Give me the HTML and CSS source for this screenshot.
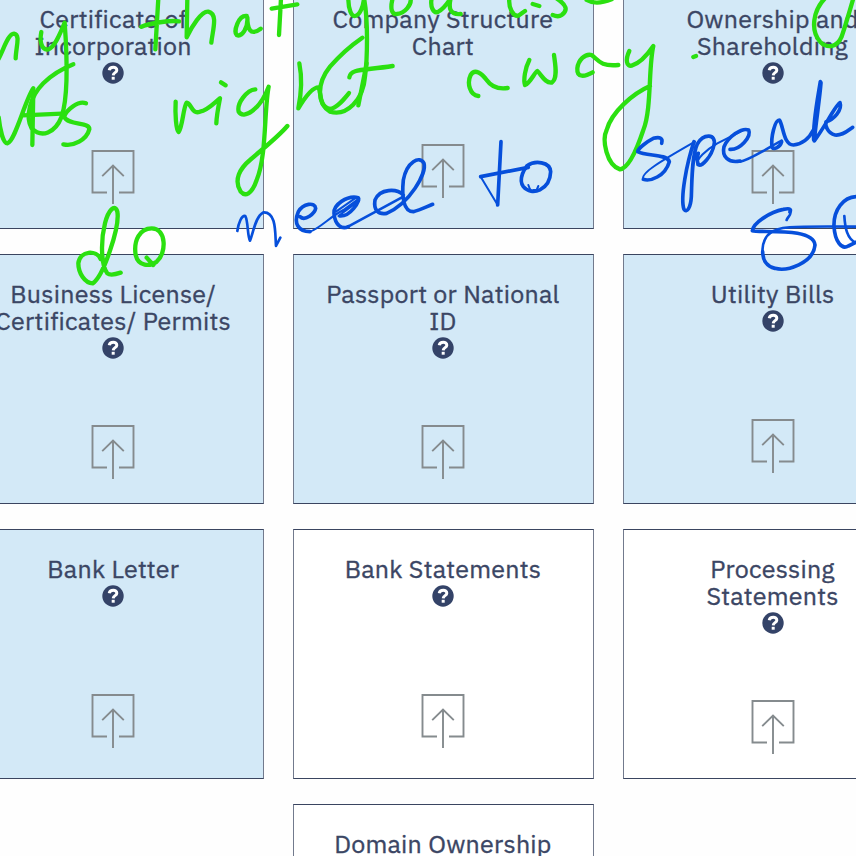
FILE: index.html
```
<!DOCTYPE html>
<html lang="en">
<head>
<meta charset="utf-8">
<title>Documents</title>
<link rel="stylesheet" href="styles.css">
</head>
<body>
<svg class="defs" width="0" height="0">
  <symbol id="help" viewBox="0 0 22 22">
    <circle cx="11" cy="11" r="10.7" fill="#344368"/>
    <path d="M7.2 8.2C8 4.4 14.9 4.4 14.8 8.2C14.7 10.8 11.4 10.5 11.2 13.4" fill="none" stroke="#fff" stroke-width="3"/>
    <rect x="9.7" y="14.8" width="3" height="2.9" fill="#fff"/>
  </symbol>
  <symbol id="upload" viewBox="0 0 44 55">
    <path d="M16 42.5H1.5V1H42.5V42.5H28M22 54V15.5M11.2 26.2L22 15.5L32.8 26.2" fill="none" stroke="#858b8e" stroke-width="1.9"/>
  </symbol>
</svg>
<main class="grid">
  <section class="card filled"><h2>Certificate of<br>Incorporation</h2><svg class="help"><use href="#help"/></svg><svg class="upload"><use href="#upload"/></svg></section>
  <section class="card filled"><h2>Company Structure<br>Chart</h2><svg class="help hidden"><use href="#help"/></svg><svg class="upload lift"><use href="#upload"/></svg></section>
  <section class="card filled"><h2>Ownership and<br>Shareholding</h2><svg class="help"><use href="#help"/></svg><svg class="upload"><use href="#upload"/></svg></section>
  <section class="card filled"><h2>Business License/<br>Certificates/ Permits</h2><svg class="help"><use href="#help"/></svg><svg class="upload"><use href="#upload"/></svg></section>
  <section class="card filled"><h2>Passport or National<br>ID</h2><svg class="help"><use href="#help"/></svg><svg class="upload"><use href="#upload"/></svg></section>
  <section class="card filled single"><h2>Utility Bills</h2><svg class="help"><use href="#help"/></svg><svg class="upload"><use href="#upload"/></svg></section>
  <section class="card filled single"><h2>Bank Letter</h2><svg class="help"><use href="#help"/></svg><svg class="upload"><use href="#upload"/></svg></section>
  <section class="card single"><h2>Bank Statements</h2><svg class="help"><use href="#help"/></svg><svg class="upload"><use href="#upload"/></svg></section>
  <section class="card"><h2>Processing<br>Statements</h2><svg class="help"><use href="#help"/></svg><svg class="upload"><use href="#upload"/></svg></section>
  <section class="card last"><h2>Domain Ownership</h2></section>
</main>
<svg class="ink" viewBox="0 0 856 856">
  <g class="green">
    <g transform="scale(.33333)">
      <path d="M-4 176C10 150 25 100 42 101C62 104 48 140 47 175"/>
      <path d="M124 96C118 125 125 152 145 148C165 142 180 100 194 68C200 150 208 280 185 350C165 400 125 415 95 385C75 350 90 290 130 250C155 225 190 205 220 193"/>
      <path d="M-4 352C0 390 10 430 22 430C45 425 75 300 100 265L97 435M68 346L185 341"/>
      <path d="M258 310C235 300 200 330 192 350C205 378 270 365 268 388C260 420 220 440 190 433"/>
      <path d="M475 -5L466 148M424 80C450 70 510 60 537 64"/>
      <path d="M562 -5L560 112C575 80 605 32 625 35C655 42 638 90 634 128"/>
      <path d="M740 48C715 45 700 95 710 105C725 112 745 85 742 52C742 85 750 110 782 86"/>
      <path d="M843 -5L837 105M815 26L892 13"/>
      <path d="M527 305C525 340 528 390 536 396C548 380 550 320 560 308C575 310 575 345 600 335C625 330 640 310 660 295C655 320 650 345 649 370M663 247L677 256"/>
      <path d="M766 268C740 270 710 310 716 335C730 360 780 330 806 260C792 330 800 470 770 540C755 585 735 590 722 575C700 540 720 505 750 480C790 445 835 410 862 378"/>
    </g>
    <g transform="translate(280 0) scale(.33333)">
      <path d="M205 -5C205 30 215 50 225 48C240 45 250 20 252 -5C265 60 262 180 255 230C250 300 200 350 150 335C110 310 110 250 150 200C180 165 215 135 247 113"/>
      <path d="M58 190C68 240 60 300 55 325C70 300 95 262 115 262C125 275 115 320 150 327C170 325 190 300 207 279"/>
      <path d="M235 316L260 190M208 232C212 205 250 212 338 198"/>
      <path d="M338 -5C330 25 335 45 350 42C375 40 395 15 392 -5M455 -5C450 20 460 42 475 35C495 25 508 0 512 -5C505 25 510 45 542 42"/>
      <path d="M688 -5C685 25 700 50 715 47L735 33M758 12L778 18M830 -5C860 15 865 30 845 45C838 50 825 48 818 45"/>
      <path d="M595 288C570 285 560 250 572 225C585 205 605 220 620 240C635 262 655 268 683 264"/>
      <path d="M748 180C735 205 730 240 735 255C750 250 765 215 772 213C785 225 795 250 815 248C835 235 825 190 822 165"/>
    </g>
    <g transform="translate(560 0) scale(.33333)">
      <path d="M80 0C100 12 130 8 155 -2"/>
      <path d="M98 217C75 230 50 235 52 205C55 180 75 160 95 165C115 180 120 200 175 195"/>
      <path d="M208 153C195 180 200 200 215 197C240 190 265 160 280 138C265 200 275 330 250 390C230 450 205 505 180 508C140 495 125 420 140 390C155 335 220 280 270 258"/>
      <path d="M400 171L408 168M795 -5C760 30 750 90 780 125C800 145 830 145 845 110C855 80 870 30 880 -5"/>
    </g>
    <g transform="translate(0 140) scale(.33333)">
      <path d="M302 357C290 330 240 330 235 370C235 400 255 430 278 430C310 410 360 260 352 215C345 190 325 210 315 250C300 310 305 380 322 400C332 408 350 402 362 398"/>
      <path d="M455 265C420 265 400 300 407 345C415 380 450 380 470 365C500 340 500 265 455 265M440 353L460 375"/>
    </g>
  </g>
  <g class="blue">
    <g transform="translate(230 130) scale(.33333)">
      <path class="medium" d="M22 303C25 280 35 255 46 258C55 275 52 320 60 332C70 310 75 260 100 247C140 245 135 310 138 348L151 323"/>
      <path d="M210 260C225 275 255 250 257 235C255 215 220 220 205 245C190 280 205 305 240 305"/>
      <path class="fine" d="M240 305C270 295 300 260 340 240L388 205M318 245L375 205M325 258L380 218"/>
      <path d="M330 258C360 260 390 215 385 203C350 195 310 225 312 250C315 285 335 300 355 290"/>
      <path class="medium" d="M350 292L520 200"/>
      <path d="M520 195C500 175 450 175 435 210C430 240 445 255 470 250C540 220 590 130 582 100C570 75 530 95 520 150C515 200 520 245 550 245C570 240 590 230 608 223"/>
      <path d="M813 35L803 225"/><path class="fine" d="M803 225L752 140"/><path d="M752 140L895 112"/>
      <path d="M905 100C880 110 865 150 880 170C905 200 960 180 962 125C960 95 915 90 890 108"/>
      <path class="fine" d="M895 165C900 180 905 187 910 180L920 180L925 168"/>
    </g>
    <g transform="translate(620 70) scale(.33333)">
      <path d="M125 220C130 203 118 200 100 205C80 215 55 235 53 245C80 260 140 250 148 275C135 320 90 335 70 328"/>
      <path class="fine" d="M70 328C60 310 120 275 225 215M232 285C225 270 260 238 292 220L375 178"/>
      <path class="medium" d="M360 275C390 270 440 235 485 212"/>
      <path d="M222 215C200 280 180 385 192 418C200 430 212 415 214 380C216 330 215 260 232 222C250 190 290 190 282 225C275 260 245 290 236 285C230 275 232 260 235 250"/>
      <path d="M330 238C360 240 395 200 386 180C365 172 325 200 312 230C305 260 325 280 360 273"/>
      <path d="M485 215C480 232 462 240 456 232C452 200 465 150 478 150C490 165 490 225 520 225C550 222 570 200 580 180"/>
      <path d="M601 35C592 90 578 160 581 210M603 38C599 90 588 155 583 213C615 170 650 100 660 98C668 120 640 150 618 155C615 165 622 190 645 195C670 198 685 180 698 172"/>
    </g>
    <g transform="translate(600 130) scale(.33333)">
      <path d="M570 246C575 235 565 235 550 238C510 245 460 280 457 302C480 310 640 290 645 345C640 400 560 425 525 415C500 410 488 390 488 365"/>
      <path class="medium" d="M560 270C563 260 575 255 570 246M488 365C485 340 500 315 510 310C530 290 560 288 772 290"/>
      <path d="M772 200C730 200 700 240 702 290C705 335 725 360 745 348L772 335"/>
      <path class="medium" d="M733 258C735 290 740 330 772 340"/>
    </g>
  </g>
</svg>
</body>
</html>
```

FILE: styles.css
```
* { box-sizing: border-box; }
html, body { margin: 0; height: 856px; overflow: hidden; background: #fefefe; }
body { position: relative; font-family: "IBM Plex Sans", "Noto Sans", sans-serif; }
.defs { position: absolute; }
.grid {
  display: grid;
  grid-template-columns: repeat(3, 301px);
  grid-auto-rows: 250px;
  gap: 25px 28.7px;
  margin: -21px 0 0 -36.8px;
  width: 961px;
}
.card {
  display: flex;
  flex-direction: column;
  align-items: center;
  padding: 25px 1px 0 0;
  border: 1px solid #3a4560;
  border-left-color: #727a8d;
  border-right-color: #727a8d;
  background: #fff;
}
.filled { background: #d3e9f7; }
.last { grid-column: 2; }
h2 {
  margin: 0;
  font-size: 25px;
  font-weight: 400;
  line-height: 27px;
  letter-spacing: 0.25px;
  color: #3b4664;
  -webkit-text-stroke: 0.35px #3b4664;
  text-align: center;
  white-space: nowrap;
}
.help { width: 22px; height: 22px; margin: 3px 0; flex: none; }
.hidden { visibility: hidden; }
.upload { width: 44px; height: 55px; margin-top: 63px; flex: none; }
.lift { margin-top: 57px; }
.single .upload { margin-top: 84px; }
.ink {
  position: absolute;
  left: 0;
  top: 0;
  width: 856px;
  height: 856px;
  fill: none;
  stroke-linecap: round;
  stroke-linejoin: round;
}
.green { stroke: #2be010; stroke-width: 13; }
.blue { stroke: #064fdb; stroke-width: 11; }
.medium { stroke-width: 8; }
.fine { stroke-width: 6; }
```
